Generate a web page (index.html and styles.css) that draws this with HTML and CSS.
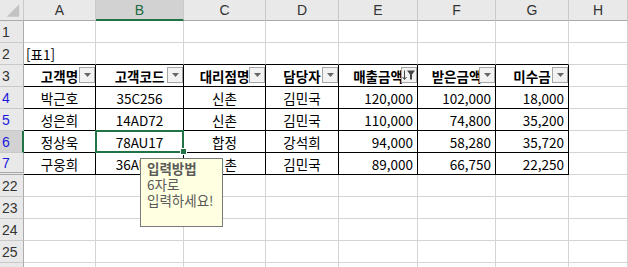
FILE: index.html
```html
<!DOCTYPE html>
<html lang="ko">
<head>
    <meta charset="UTF-8">
    <title>표1</title>
    <link rel="stylesheet" href="styles.css">
</head>
<body>
    <div class="sheet">
        <!-- column headers -->
        <div class="hd corner"><svg width="24" height="21" viewBox="0 0 24 21"><polygon points="7,17 20,17 20,4" fill="#c3c3c3"/></svg></div>
        <div class="hd col">A</div>
        <div class="hd col on">B</div>
        <div class="hd col">C</div>
        <div class="hd col">D</div>
        <div class="hd col">E</div>
        <div class="hd col">F</div>
        <div class="hd col">G</div>
        <div class="hd col">H</div>

        <!-- row 1 -->
        <div class="hd row">1</div>
        <div class="c"></div><div class="c"></div><div class="c"></div><div class="c"></div>
        <div class="c"></div><div class="c"></div><div class="c"></div><div class="c"></div>

        <!-- row 2 -->
        <div class="hd row">2</div>
        <div class="c above left">[표1]</div><div class="c above"></div><div class="c above"></div><div class="c above"></div>
        <div class="c above"></div><div class="c above"></div><div class="c above"></div><div class="c"></div>

        <!-- row 3 : table head -->
        <div class="hd row">3</div>
        <div class="c t th">고객명<span class="dd"><svg width="7" height="4"><polygon points="0,0 7,0 3.5,4" fill="#666"/></svg></span></div>
        <div class="c t th">고객코드<span class="dd"><svg width="7" height="4"><polygon points="0,0 7,0 3.5,4" fill="#666"/></svg></span></div>
        <div class="c t th">대리점명<span class="dd"><svg width="7" height="4"><polygon points="0,0 7,0 3.5,4" fill="#666"/></svg></span></div>
        <div class="c t th">담당자<span class="dd"><svg width="7" height="4"><polygon points="0,0 7,0 3.5,4" fill="#666"/></svg></span></div>
        <div class="c t th">매출금액<span class="dd"><svg width="14" height="10" viewBox="0 0 14 10"><path d="M2.5 0.5V9M0.5 7l2 2.5 2-2.5" stroke="#444" stroke-width="1" fill="none"/><polygon points="5,0.5 13,0.5 10,4.5 10,9.5 8,9.5 8,4.5" fill="#444"/></svg></span></div>
        <div class="c t th">받은금액<span class="dd"><svg width="7" height="4"><polygon points="0,0 7,0 3.5,4" fill="#666"/></svg></span></div>
        <div class="c t th">미수금<span class="dd"><svg width="7" height="4"><polygon points="0,0 7,0 3.5,4" fill="#666"/></svg></span></div>
        <div class="c"></div>

        <!-- row 4 -->
        <div class="hd row blue">4</div>
        <div class="c t">박근호</div><div class="c t">35C256</div><div class="c t">신촌</div><div class="c t">김민국</div>
        <div class="c t num">120,000</div><div class="c t num">102,000</div><div class="c t num">18,000</div><div class="c"></div>

        <!-- row 5 -->
        <div class="hd row blue">5</div>
        <div class="c t">성은희</div><div class="c t">14AD72</div><div class="c t">신촌</div><div class="c t">김민국</div>
        <div class="c t num">110,000</div><div class="c t num">74,800</div><div class="c t num">35,200</div><div class="c"></div>

        <!-- row 6 -->
        <div class="hd row blue on">6</div>
        <div class="c t">정상욱</div><div class="c t sel">78AU17</div><div class="c t">합정</div><div class="c t">강석희</div>
        <div class="c t num">94,000</div><div class="c t num">58,280</div><div class="c t num">35,720</div><div class="c"></div>

        <!-- row 7 -->
        <div class="hd row blue hidden-after">7</div>
        <div class="c t">구웅희</div><div class="c t">36AU22</div><div class="c t">신촌</div><div class="c t">김민국</div>
        <div class="c t num">89,000</div><div class="c t num">66,750</div><div class="c t num">22,250</div><div class="c"></div>

        <!-- rows 22-25 -->
        <div class="hd row">22</div>
        <div class="c"></div><div class="c"></div><div class="c"></div><div class="c"></div>
        <div class="c"></div><div class="c"></div><div class="c"></div><div class="c"></div>
        <div class="hd row">23</div>
        <div class="c"></div><div class="c"></div><div class="c"></div><div class="c"></div>
        <div class="c"></div><div class="c"></div><div class="c"></div><div class="c"></div>
        <div class="hd row">24</div>
        <div class="c"></div><div class="c"></div><div class="c"></div><div class="c"></div>
        <div class="c"></div><div class="c"></div><div class="c"></div><div class="c"></div>
        <div class="hd row">25</div>
        <div class="c"></div><div class="c"></div><div class="c"></div><div class="c"></div>
        <div class="c"></div><div class="c"></div><div class="c"></div><div class="c"></div>
        <div class="hd row"></div>
        <div class="c"></div><div class="c"></div><div class="c"></div><div class="c"></div>
        <div class="c"></div><div class="c"></div><div class="c"></div><div class="c"></div>

        <!-- data validation input message -->
        <div class="tip">
            <b>입력방법</b>
            <span>6자로</span>
            <span>입력하세요!</span>
        </div>
    </div>
</body>
</html>
```

FILE: styles.css
```css
body {
    margin: 0;
    background: #ffffff;
    font-family: "Noto Sans CJK KR", "Noto Sans", sans-serif;
    font-size: 13.5px;
    color: #000;
    overflow: hidden;
}

.sheet {
    position: relative;
    display: grid;
    grid-template-columns: 24px 72px 88px 82px 73px 79px 78px 73px 1fr;
    grid-template-rows: 21px;
    grid-auto-rows: 22px;
    width: 628px;
    height: 267px;
    overflow: hidden;
}

.sheet > div {
    box-sizing: border-box;
}

/* headers */
.hd {
    background: #e9e9e9;
    border-right: 1px solid #c9c9c9;
    border-bottom: 1px solid #c9c9c9;
    color: #333;
    font-family: "Liberation Sans", "Noto Sans CJK KR", sans-serif;
    font-size: 14px;
    display: flex;
    align-items: center;
}

.corner {
    border-bottom-color: #ababab;
}

.corner svg {
    display: block;
}

.col {
    justify-content: center;
    border-bottom-color: #ababab;
}

.row {
    padding-left: 2px;
    border-right-color: #ababab;
}

.hd.on {
    background: #d2d2d2;
}

.col.on {
    color: #1e6b41;
    border-bottom: 2px solid #217346;
}

.row.on {
    border-right: 2px solid #217346;
}

.blue {
    color: #1a1adb;
}

.hidden-after {
    border-bottom: 3px double #a8a8a8;
}

/* cells */
.c {
    border-right: 1px solid #d4d4d4;
    border-bottom: 1px solid #d4d4d4;
    display: flex;
    align-items: center;
    justify-content: center;
    white-space: nowrap;
    overflow: hidden;
    position: relative;
}

.c.left {
    justify-content: flex-start;
    padding-left: 2px;
}

.c.above {
    border-bottom-color: #000;
}

.c.t {
    border-right-color: #000;
    border-bottom-color: #000;
}

.c.num {
    justify-content: flex-end;
    padding-right: 4px;
}

.th {
    font-weight: bold;
    overflow: visible;
}

.dd {
    position: absolute;
    right: 0;
    top: 2px;
    width: 16px;
    height: 16px;
    box-sizing: border-box;
    background: #f2f2f2;
    border: 1px solid #a6a6a6;
    display: flex;
    align-items: center;
    justify-content: center;
}

.dd svg {
    display: block;
}

/* selected cell */
.sel {
    overflow: visible;
}

.sel::after {
    content: "";
    position: absolute;
    inset: -1px;
    border: 2px solid #217346;
}

.sel::before {
    content: "";
    position: absolute;
    right: -4px;
    bottom: -3px;
    width: 5px;
    height: 5px;
    background: #217346;
    border: 1px solid #fff;
    z-index: 2;
}

/* input message */
.tip {
    position: absolute;
    left: 140px;
    top: 158px;
    width: 83px;
    height: 69px;
    background: #ffffe1;
    border: 1px solid #7a7a7a;
    padding: 1px 0 0 6px;
    color: #5a5a5a;
    font-size: 13.5px;
    line-height: 16px;
    display: flex;
    flex-direction: column;
    z-index: 3;
}
```
